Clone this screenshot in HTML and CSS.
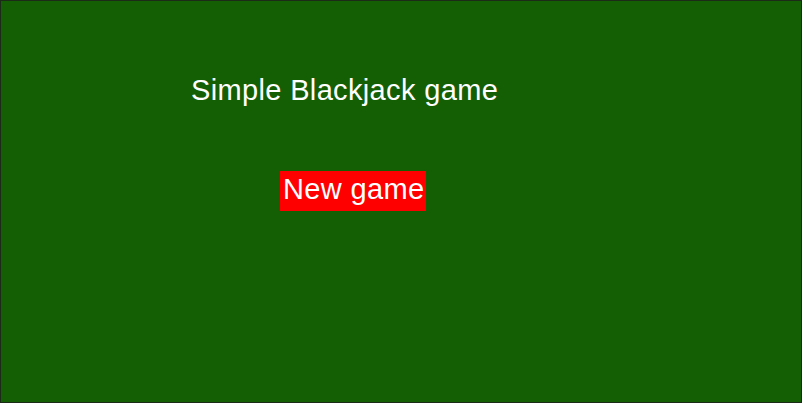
FILE: index.html
```html
<!DOCTYPE html>
<html>
<head>
<meta charset="utf-8">
<link rel="stylesheet" href="styles.css">
</head>
<body>
<div class="table">
  <h1 class="title">Simple Blackjack game</h1>
  <div class="controls">
    <button class="new-game">New game</button>
  </div>
</div>
</body>
</html>
```
FILE: styles.css
```css
html, body {
  margin: 0;
  padding: 0;
}
body {
  font-family: "Liberation Sans", Arial, sans-serif;
}
.table {
  box-sizing: border-box;
  width: 802px;
  height: 403px;
  background: #145e04;
  border: 1px solid #1c2a18;
  padding-top: 72px;
}
.title {
  margin: 0 0 0 190px;
  font-weight: normal;
  font-size: 29px;
  letter-spacing: 0.35px;
  line-height: 34px;
  color: #ffffff;
}
.controls {
  margin-top: 64px;
  padding-left: 279px;
}
.new-game {
  font-family: "Liberation Sans", Arial, sans-serif;
  font-size: 29px;
  letter-spacing: 0.35px;
  line-height: 32px;
  color: #ffffff;
  background: #ff0000;
  border: none;
  padding: 2px 2px 6px 3px;
  margin: 0;
  cursor: pointer;
}
```
